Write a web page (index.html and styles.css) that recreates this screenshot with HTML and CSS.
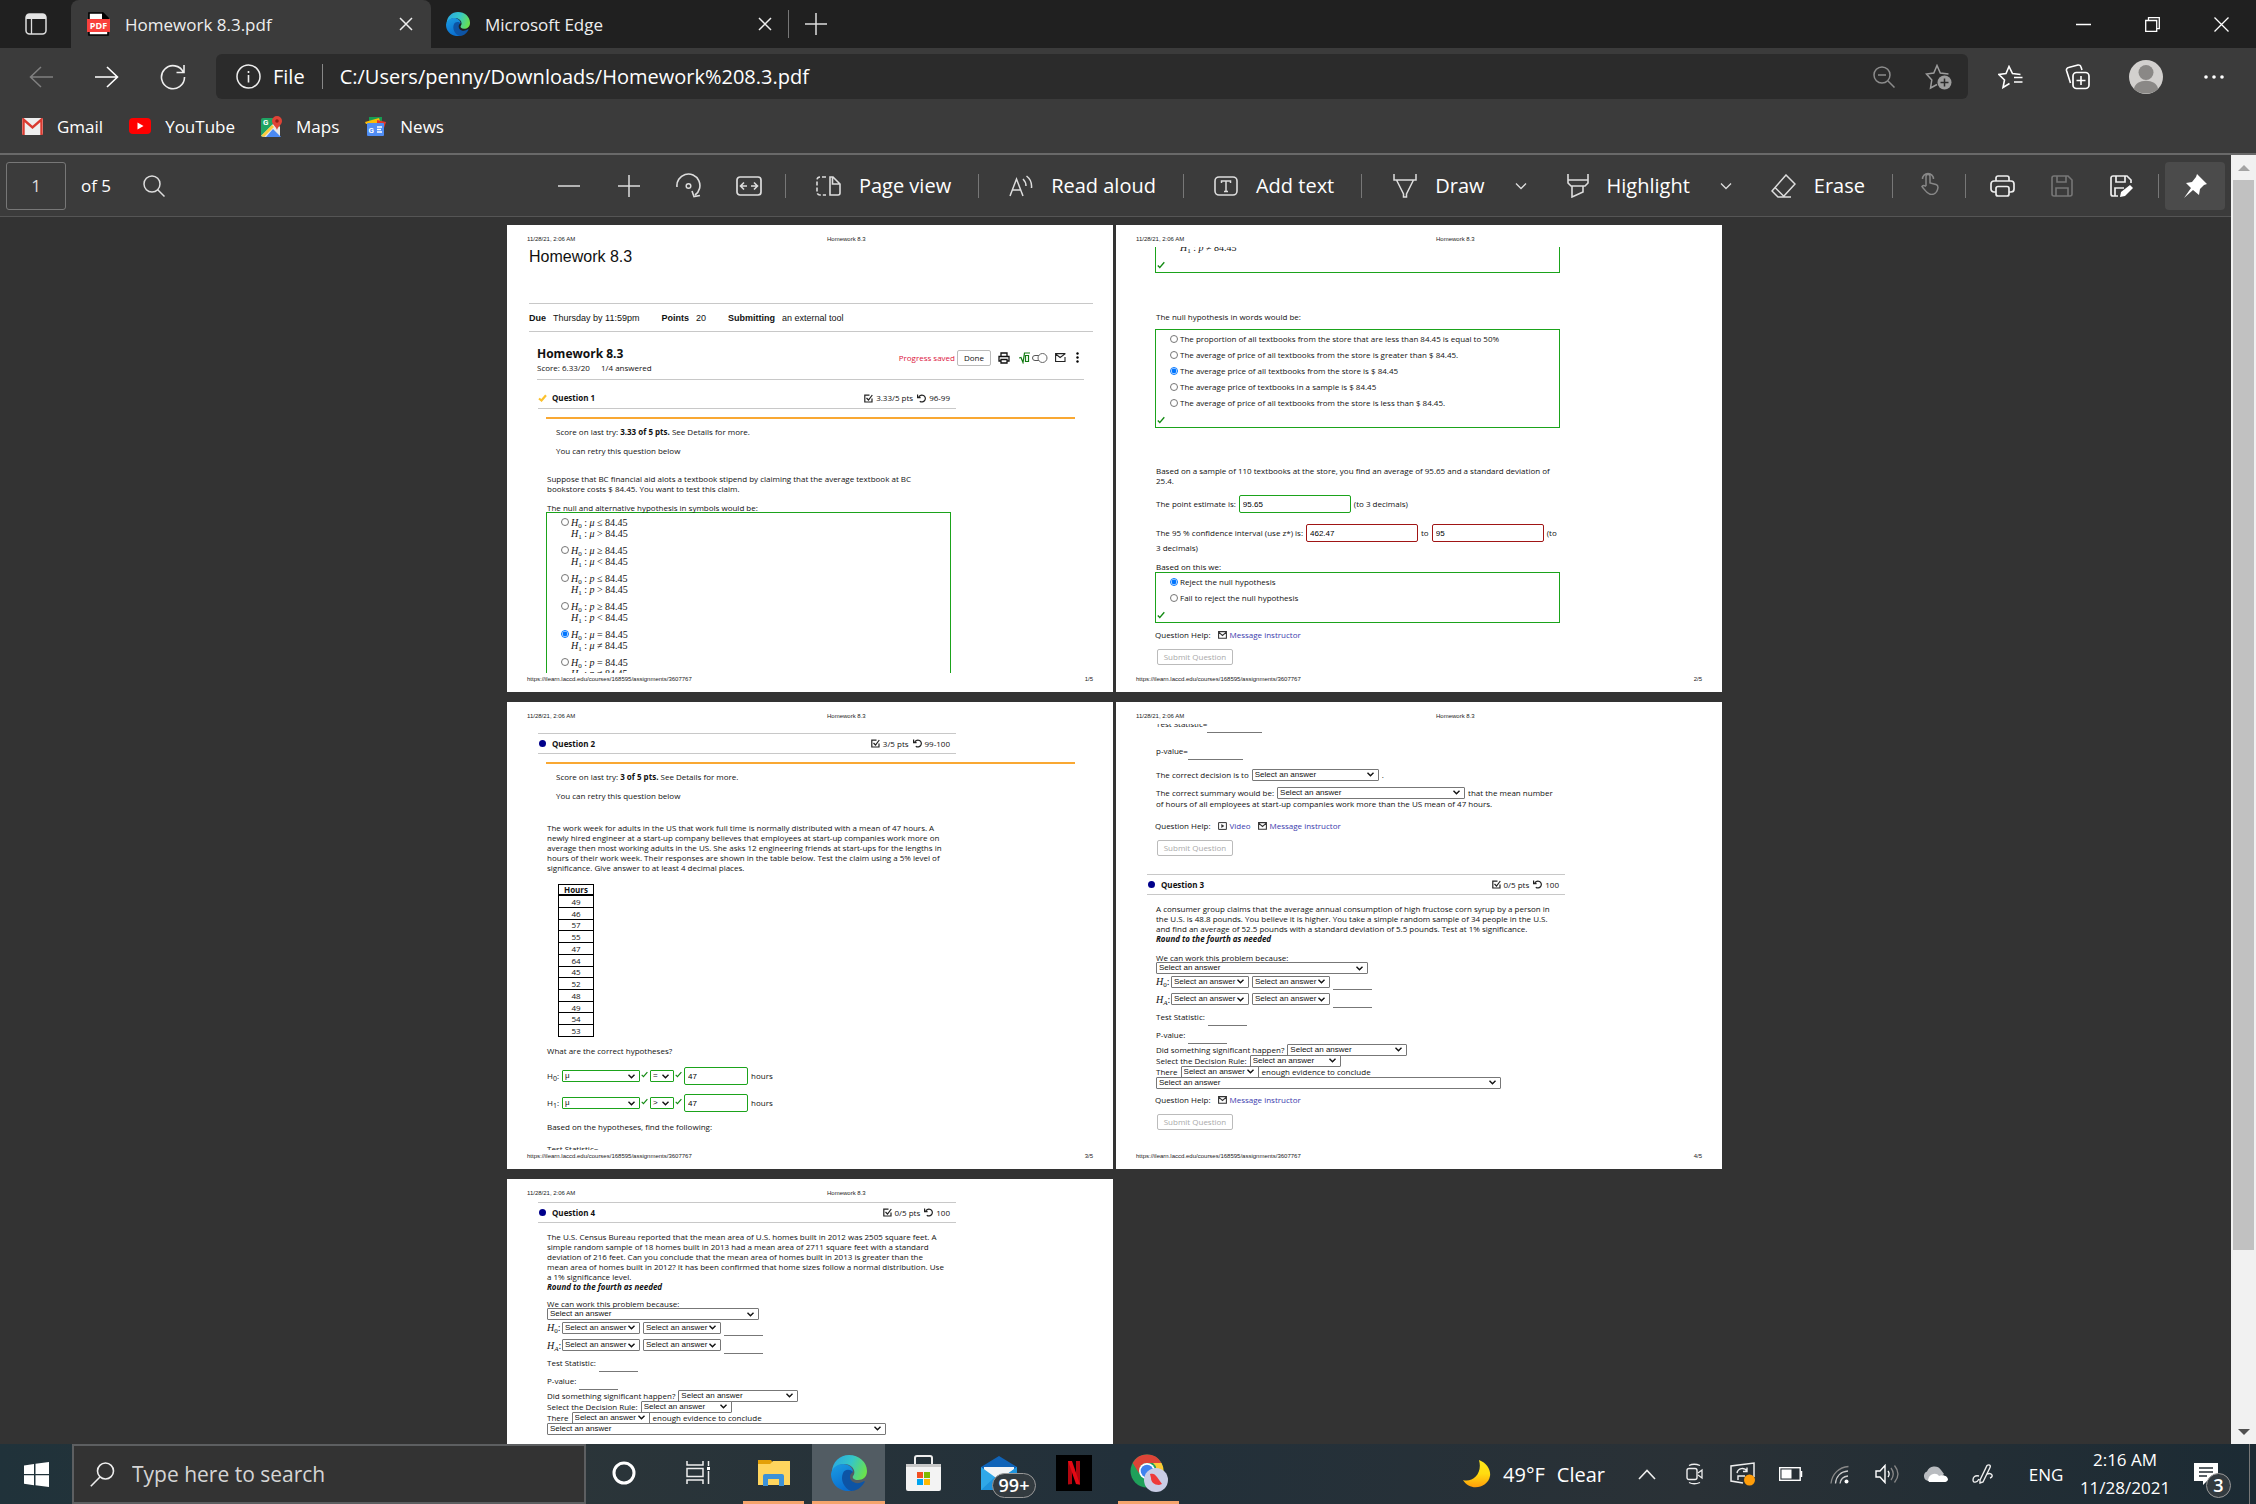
FILE: index.html
```html
<!DOCTYPE html>
<html lang="en">
<head>
  <meta charset="UTF-8" />
  <meta name="viewport" content="width=device-width, initial-scale=1.0" />
  <title>Homework 8.3.pdf</title>
  <link rel="stylesheet" href="styles.css">
</head>
<body>
  <!-- shared icons -->
  <svg class="sprite" aria-hidden="true">
    <defs>
      <linearGradient id="edge-top" x1="0" y1="0.3" x2="1" y2="0.6">
        <stop offset="0" stop-color="#2aa9e0" /><stop offset="0.5" stop-color="#35c6c8" /><stop offset="1" stop-color="#6be24a" />
      </linearGradient>
      <linearGradient id="edge-left" x1="0" y1="0" x2="0.4" y2="1">
        <stop offset="0" stop-color="#1b9de2" /><stop offset="1" stop-color="#0a6fd0" />
      </linearGradient>
      <linearGradient id="moon" x1="0" y1="0" x2="0" y2="1">
        <stop offset="0" stop-color="#ffe81a" /><stop offset="0.5" stop-color="#ffdc10" /><stop offset="1" stop-color="#ff9d0a" />
      </linearGradient>
    </defs>
    <symbol id="edge" viewBox="0 0 36 36">
      <path d="M1 17C1 7 9 0 18 0c10 0 18 7 18 16 0 6-4 9-9 9-4 0-6-2-5-4 2-2 2-6-1-9C16 7 6 8 1 17z" fill="url(#edge-top)" />
      <path d="M0 19C1 12 7 9 12 9c6 0 10 4 10 8-5-3-10 1-9 7 1 6 5 10 10 12C11 38 0 31 0 19z" fill="url(#edge-left)" />
      <path d="M12 18c2-4 7-4 10-1-3 2-4 5-2 8 3 4 9 4 13 1 1 0 1 1 0 2-3 5-8 8-13 8-7-3-11-11-8-18z" fill="#0d54a5" />
    </symbol>
    <symbol id="close" viewBox="0 0 14 14"><path d="M1 1l12 12M13 1L1 13" stroke="#eee" stroke-width="1.5" /></symbol>
    <symbol id="chevron" viewBox="0 0 12 8"><path d="M1 1.500l5 5 5-5" fill="none" stroke="#ddd" stroke-width="1.300" /></symbol>
    <symbol id="pts" viewBox="0 0 9 9"><path d="M8 4.500v3.500H.800V1.200H5.500M2.500 4l2 2L8.300 1" fill="none" stroke="#222" stroke-width="1.200" /></symbol>
    <symbol id="undo" viewBox="0 0 9 9"><path d="M1.800 3.200A3.400 3.400 0 1 1 2.800 7.200M.600.600v3h3" fill="none" stroke="#222" stroke-width="1.200" /></symbol>
    <symbol id="mail" viewBox="0 0 9 8"><path d="M.600.600h7.800v6.600H.600zM.600 1.200l3.900 3.300 3.900-3.300" fill="none" stroke="#333" stroke-width="1.100" /></symbol>
    <symbol id="tick" viewBox="0 0 8 7"><path d="M.800 4l2 2L7.300.800" fill="none" stroke="#128a12" stroke-width="1.300" /></symbol>
  </svg>

  <header class="browser">
    <div class="tabs">
      <button class="tab-menu" aria-label="Tab actions">
        <svg width="22" height="22" viewBox="0 0 22 22"><rect x="1" y="1" width="20" height="20" rx="3.500" fill="none" stroke="#ddd" stroke-width="1.500" /><path d="M1 6V4a3 3 0 0 1 3-3h14a3 3 0 0 1 3 3v2z" fill="#e4e4e4" /><path d="M6.500 6v15" stroke="#ddd" stroke-width="1.300" /></svg>
      </button>
      <div class="tab active">
        <svg width="23" height="24" viewBox="0 0 23 24"><path d="M2 1h14l5 5v17H2z" fill="#fff" stroke="#000" stroke-width="1.600" /><path d="M15 0l7 7h-7z" fill="#000" /><rect y="7" width="23" height="13" fill="#f8403c" /><text x="11.500" y="17" text-anchor="middle" class="pdf-text">PDF</text></svg>
        <span>Homework 8.3.pdf</span>
        <button aria-label="Close tab"><svg width="14" height="14"><use href="#close" /></svg></button>
      </div>
      <div class="tab">
        <svg width="24" height="24"><use href="#edge" /></svg>
        <span>Microsoft Edge</span>
        <button aria-label="Close tab"><svg width="14" height="14"><use href="#close" /></svg></button>
      </div>
      <button class="new-tab" aria-label="New tab"><svg width="22" height="22" viewBox="0 0 22 22"><path d="M11 0v22M0 11h22" stroke="#ddd" stroke-width="1.500" /></svg></button>
      <div class="window-controls">
        <button aria-label="Minimize"><svg width="15" height="15" viewBox="0 0 15 15"><path d="M0 7.500h15" stroke="#fff" stroke-width="1.500" /></svg></button>
        <button aria-label="Restore"><svg width="15" height="15" viewBox="0 0 15 15"><path d="M.700 3.500h11v10.800h-11zM3.500 3V.700h10.800v11h-2.300" fill="none" stroke="#fff" stroke-width="1.300" /></svg></button>
        <button aria-label="Close"><svg width="15" height="15" viewBox="0 0 15 15"><path d="M.500.500l14 14M14.500.500l-14 14" stroke="#fff" stroke-width="1.300" /></svg></button>
      </div>
    </div>

    <nav class="navbar">
      <button aria-label="Back"><svg width="24" height="22" viewBox="0 0 24 22"><path d="M24 11H1.500M12 1L1.500 11 12 21" fill="none" stroke="#808080" stroke-width="1.500" /></svg></button>
      <button aria-label="Forward"><svg width="24" height="22" viewBox="0 0 24 22"><path d="M0 11h22.500M12 1l10.500 10L12 21" fill="none" stroke="#fff" stroke-width="1.600" /></svg></button>
      <button aria-label="Refresh"><svg width="26" height="26" viewBox="0 0 26 26"><path d="M23.500 8.500A11.500 11.500 0 1 0 24.500 13M24 1v7.500h-7.500" fill="none" stroke="#eee" stroke-width="1.600" /></svg></button>
      <div class="address">
        <svg width="25" height="25" viewBox="0 0 25 25"><circle cx="12.500" cy="12.500" r="11.500" fill="none" stroke="#eee" stroke-width="1.500" /><path d="M12.500 11v7.500M12.500 7v2" stroke="#eee" stroke-width="1.600" /></svg>
        <span class="scheme">File</span>
        <input type="text" aria-label="Address" value="C:/Users/penny/Downloads/Homework%208.3.pdf">
        <button aria-label="Zoom out"><svg width="22" height="22" viewBox="0 0 22 22"><circle cx="9" cy="9" r="8" fill="none" stroke="#8c8c8c" stroke-width="1.500" /><path d="M15 15l6.500 6.500M5 9h8" stroke="#8c8c8c" stroke-width="1.500" /></svg></button>
        <button aria-label="Add to favorites"><svg width="27" height="26" viewBox="0 0 27 26"><path d="M12 20.500L5.500 24l1.300-8L1.500 10l7.300-1L12 1.500l3.300 7.500 8.200 1" fill="none" stroke="#9c9c9c" stroke-width="1.500" /><circle cx="19.500" cy="18.500" r="7" fill="#9c9c9c" /><path d="M19.500 14.500v8M15.500 18.500h8" stroke="#2b2b2b" stroke-width="1.500" /></svg></button>
      </div>
      <button class="wide" aria-label="Favorites"><svg width="25" height="24" viewBox="0 0 25 24"><path d="M11.500 18.500L5 22.500l1.500-7.500-5.500-5.500 7-1 3-7 3.500 7 8 1M16 12.500h8.500M16 17h8.500" fill="none" stroke="#fff" stroke-width="1.600" /></svg></button>
      <button class="wide" aria-label="Collections"><svg width="26" height="26" viewBox="0 0 26 26"><rect x="8" y="8.500" width="16" height="16" rx="3.500" fill="none" stroke="#fff" stroke-width="1.700" /><path d="M16 12v9M11.500 16.500h9M5.500 19L1.500 6.500a2.500 2.500 0 0 1 2-3L13 1a2.500 2.500 0 0 1 3 2l1 3" fill="none" stroke="#fff" stroke-width="1.600" /></svg></button>
      <button class="wide" aria-label="Profile"><svg width="34" height="34" viewBox="0 0 34 34"><circle cx="17" cy="17" r="17" fill="#d2d0ce" /><circle cx="17" cy="12.500" r="7.500" fill="#8a8886" /><path d="M5 29c1-11 23-11 24 0-6 6-18 6-24 0z" fill="#8a8886" /></svg></button>
      <button class="wide" aria-label="Settings and more"><svg width="20" height="4" viewBox="0 0 20 4"><circle cx="2" cy="2" r="1.800" fill="#fff" /><circle cx="10" cy="2" r="1.800" fill="#fff" /><circle cx="18" cy="2" r="1.800" fill="#fff" /></svg></button>
    </nav>

    <div class="bookmarks">
      <a href="#"><svg width="21" height="17" viewBox="0 0 21 17"><rect width="21" height="17" rx="2" fill="#eee" /><path d="M1.500 17V1.500l9 8 9-8V17" fill="none" stroke="#d93a30" stroke-width="2.400" /></svg>Gmail</a>
      <a href="#"><svg width="22" height="16" viewBox="0 0 22 16"><rect width="22" height="16" rx="4" fill="#f00" /><path d="M8.500 4.500l6 3.500-6 3.500z" fill="#fff" /></svg>YouTube</a>
      <a href="#"><svg width="21" height="21" viewBox="0 0 21 21"><rect x="0" y="2" width="19" height="19" rx="2" fill="#1fa463" /><path d="M1 21L12 10l8 11z" fill="#4a89f3" /><path d="M0 20L14 6l5 5v9l-7-7-7 8z" fill="#e8e8e8" /><path d="M0 20l11-11 2 2-10 10z" fill="#fccc3d" /><path d="M6 21l6-7 7 7z" fill="#4a89f3" /><text x="2" y="9" class="g-text">G</text><path d="M16 0a5 5 0 0 1 5 5c0 4-4 5-5 9-1-4-5-5-5-9a5 5 0 0 1 5-5z" fill="#e04336" /><circle cx="16" cy="5" r="1.800" fill="#8c2118" /></svg>Maps</a>
      <a href="#"><svg width="21" height="19" viewBox="0 0 21 19"><path d="M4 0h13v6H4z" fill="#179c52" /><path d="M0 5l14-4 2 6H1z" fill="#fbbc05" /><path d="M12 3l9 2-2 6h-7z" fill="#e5392c" /><rect x="2" y="6" width="17" height="13" rx="1" fill="#4f8df5" /><text x="3.500" y="16" class="g-text">G</text><path d="M12 10h5M12 12.500h4M12 15h5" stroke="#fff" stroke-width="1.300" /></svg>News</a>
    </div>
  </header>

  <main class="viewer">
    <div class="pdf">
      <div class="toolbar">
        <input class="page-number" type="text" aria-label="Page number" value="1">
        <span class="page-count">of 5</span>
        <button class="search" aria-label="Search"><svg width="22" height="22" viewBox="0 0 22 22"><circle cx="9" cy="9" r="8" fill="none" stroke="#ddd" stroke-width="1.500" /><path d="M14.500 14.500l7 7" stroke="#ddd" stroke-width="1.500" /></svg></button>
        <div class="tools">
          <div class="tool-group">
            <button class="icon-tool" aria-label="Zoom out"><svg width="22" height="22" viewBox="0 0 22 22"><path d="M0 11h22" stroke="#ddd" stroke-width="1.500" /></svg></button>
            <button class="icon-tool" aria-label="Zoom in"><svg width="22" height="22" viewBox="0 0 22 22"><path d="M0 11h22M11 0v22" stroke="#ddd" stroke-width="1.500" /></svg></button>
            <button class="icon-tool" aria-label="Rotate"><svg width="26" height="26" viewBox="0 0 26 26"><path d="M1 14A11.500 11.500 0 1 1 19 22M16 18l2 5.500 6-1" fill="none" stroke="#ddd" stroke-width="1.600" /><circle cx="12.500" cy="13" r="2.300" fill="none" stroke="#ddd" stroke-width="1.500" /></svg></button>
            <button class="icon-tool" aria-label="Fit to width"><svg width="26" height="20" viewBox="0 0 26 20"><rect x="1" y="1" width="24" height="18" rx="3" fill="none" stroke="#ddd" stroke-width="1.700" /><path d="M11 10H5M8 6.500L4.500 10 8 13.500M15 10h6M18 6.500l3.500 3.500-3.500 3.500" fill="none" stroke="#ddd" stroke-width="1.600" /></svg></button>
          </div>
          <button class="tool"><svg width="25" height="20" viewBox="0 0 25 20"><path d="M14 1v18h8a2 2 0 0 0 2-2V8l-7-7zM16.500 1v7H24" fill="none" stroke="#ddd" stroke-width="1.600" /><path d="M10 1H4a3 3 0 0 0-3 3v12a3 3 0 0 0 3 3h6" fill="none" stroke="#ddd" stroke-width="1.600" stroke-dasharray="4 2" /></svg><span>Page view</span></button>
          <button class="tool"><svg width="24" height="22" viewBox="0 0 24 22"><path d="M1 21L7.500 4 14 21M3 15h9M14 4c2 2 3 4 3 7M17.500 1c4 3 5.500 7 5 12" fill="none" stroke="#ddd" stroke-width="1.500" /></svg><span>Read aloud</span></button>
          <button class="tool"><svg width="24" height="20" viewBox="0 0 24 20"><rect x="1" y="1" width="22" height="18" rx="4" fill="none" stroke="#ddd" stroke-width="1.600" /><path d="M7.500 7V5h9v2M12 5v10.500M10 15.500h4" fill="none" stroke="#ddd" stroke-width="1.500" /></svg><span>Add text</span></button>
          <button class="tool split"><svg width="24" height="24" viewBox="0 0 24 24"><path d="M1 0v6h22V0M3.500 6l7 14v3h3v-3l7-14" fill="none" stroke="#ddd" stroke-width="1.500" /></svg><span>Draw</span></button>
          <button class="more" aria-label="Draw options"><svg width="12" height="8"><use href="#chevron" /></svg></button>
          <button class="tool split"><svg width="22" height="24" viewBox="0 0 22 24"><path d="M1 0v6h20V0M1 6v3l3 3h14l3-3V6M5 12v11l11-5v-6" fill="none" stroke="#ddd" stroke-width="1.600" /></svg><span>Highlight</span></button>
          <button class="more" aria-label="Highlight options"><svg width="12" height="8"><use href="#chevron" /></svg></button>
          <button class="tool"><svg width="25" height="24" viewBox="0 0 25 24"><path d="M15 1l9 9-12 13H7l-6-6zM4 13.500l9 9M7 23h13" fill="none" stroke="#ddd" stroke-width="1.500" /></svg><span>Erase</span></button>
          <div class="tool-group">
            <button class="icon-tool raised" aria-label="Touch draw" disabled><svg width="20" height="24" viewBox="0 0 20 24"><path d="M7 15V5.500a2 2 0 0 1 4 0V12l6 1.500c1.500.500 2 1.500 2 3-.500 4-3 7-7 7-4-.500-5-3-9-8 1.500-2 2.500-1 4 0M3.500 8a5.500 5.500 0 1 1 11 0" fill="none" stroke="#888" stroke-width="1.500" /></svg></button>
          </div>
          <div class="tool-group">
            <button class="icon-tool" aria-label="Print"><svg width="25" height="22" viewBox="0 0 25 22"><path d="M6 6V3a2 2 0 0 1 2-2h9a2 2 0 0 1 2 2v3M6 17H4a3 3 0 0 1-3-3V9a3 3 0 0 1 3-3h17a3 3 0 0 1 3 3v5a3 3 0 0 1-3 3h-2" fill="none" stroke="#eee" stroke-width="1.700" /><rect x="6" y="11.500" width="13" height="9.500" rx="2" fill="none" stroke="#eee" stroke-width="1.700" /></svg></button>
            <button class="icon-tool" aria-label="Save" disabled><svg width="22" height="22" viewBox="0 0 22 22"><path d="M1 3a2 2 0 0 1 2-2h14l4 4v14a2 2 0 0 1-2 2H3a2 2 0 0 1-2-2zM6 1v6h9V1M5 21v-8h12v8" fill="none" stroke="#777" stroke-width="1.600" /></svg></button>
            <button class="icon-tool" aria-label="Save as"><svg width="24" height="22" viewBox="0 0 24 22"><path d="M21 8V5l-4-4H3a2 2 0 0 0-2 2v16a2 2 0 0 0 2 2h5M6 1v6h9V1M5 21v-8h9" fill="none" stroke="#eee" stroke-width="1.700" /><path d="M20 10l3 3-8 8-5 1 1-5z" fill="#fff" /></svg></button>
          </div>
          <button class="pin" aria-label="Unpin toolbar"><svg width="24" height="24" viewBox="0 0 24 24"><path d="M14 0l10 10-3 1-4 4-1 6-6-5-9 8 7-10-5-5 6-1 4-5z" fill="#fff" /></svg></button>
        </div>
      </div>

      <div class="pages">
        <article class="page">
          <header><span>11/28/21, 2:06 AM</span><span>Homework 8.3</span></header>
          <div class="body">
            <h1>Homework 8.3</h1>
            <div class="due"><b>Due</b><span>Thursday by 11:59pm</span><b>Points</b><span>20</span><b>Submitting</b><span>an external tool</span></div>
            <div class="assess">
              <div>
                <h2>Homework 8.3</h2>
                <p>Score: 6.33/20 <span class="answered">1/4 answered</span></p>
              </div>
              <div class="assess-tools">
                <span class="saved">Progress saved</span>
                <button class="done">Done</button>
                <svg class="printer" width="12" height="12" viewBox="0 0 12 12"><path d="M3 4V1h6v3M3 9H1V4.500h10V9H9M3 7.500h6V11H3z" fill="none" stroke="#111" stroke-width="1.300" /></svg>
                <svg width="12" height="12" viewBox="0 0 12 12"><path d="M0 6l2-.500L4 10.500 5.500 1H11M6.500 3.500h3v6h-3z" fill="none" stroke="#127a12" stroke-width="1.200" /></svg>
                <svg width="17" height="12" viewBox="0 0 17 12"><rect x="1.500" y="3.500" width="10" height="5" rx="2.500" fill="#fff" stroke="#555" /><circle cx="11.500" cy="6" r="4.500" fill="#fff" stroke="#666" /></svg>
                <svg class="envelope" width="11" height="9" viewBox="0 0 11 9"><path d="M10 4v4.500H.600V.600h9.800M.600 1l4.500 3.500L10.400.600" fill="none" stroke="#222" stroke-width="1.100" /></svg>
                <svg class="dots" width="3" height="11" viewBox="0 0 3 11"><circle cx="1.500" cy="1.500" r="1.200" /><circle cx="1.500" cy="5.500" r="1.200" /><circle cx="1.500" cy="9.500" r="1.200" /></svg>
              </div>
            </div>
            <div class="q-head first">
              <svg width="9" height="8" viewBox="0 0 9 8"><path d="M1 4.500l2.500 2L8 1.200" fill="none" stroke="#fcc12d" stroke-width="2.200" /></svg>
              <b>Question 1</b><svg width="9" height="9"><use href="#pts" /></svg><span>3.33/5 pts</span><svg width="9" height="9"><use href="#undo" /></svg><span>96-99</span>
            </div>
            <div class="notice">
              <p>Score on last try: <b>3.33 of 5 pts.</b> See Details for more.</p>
              <p>You can retry this question below</p>
            </div>
            <div class="question mt-18">
              <p>Suppose that BC financial aid alots a textbook stipend by claiming that the average textbook at BC<br>bookstore costs $ 84.45. You want to test this claim.</p>
              <p class="mt-9">The null and alternative hypothesis in symbols would be:</p>
              <div class="answers symbols">
                <label><input type="radio" name="symbols"><span class="math"><i>H</i><sub>0</sub> : <i>μ</i> ≤ 84.45<br><i>H</i><sub>1</sub> : <i>μ</i> &gt; 84.45</span></label>
                <label><input type="radio" name="symbols"><span class="math"><i>H</i><sub>0</sub> : <i>μ</i> ≥ 84.45<br><i>H</i><sub>1</sub> : <i>μ</i> &lt; 84.45</span></label>
                <label><input type="radio" name="symbols"><span class="math"><i>H</i><sub>0</sub> : <i>p</i> ≤ 84.45<br><i>H</i><sub>1</sub> : <i>p</i> &gt; 84.45</span></label>
                <label><input type="radio" name="symbols"><span class="math"><i>H</i><sub>0</sub> : <i>p</i> ≥ 84.45<br><i>H</i><sub>1</sub> : <i>p</i> &lt; 84.45</span></label>
                <label><input type="radio" name="symbols" checked><span class="math"><i>H</i><sub>0</sub> : <i>μ</i> = 84.45<br><i>H</i><sub>1</sub> : <i>μ</i> ≠ 84.45</span></label>
                <label><input type="radio" name="symbols"><span class="math"><i>H</i><sub>0</sub> : <i>p</i> = 84.45<br><i>H</i><sub>1</sub> : <i>p</i> ≠ 84.45</span></label>
              </div>
            </div>
          </div>
          <footer><span>https://ilearn.laccd.edu/courses/168595/assignments/3607767</span><span>1/5</span></footer>
        </article>

        <article class="page">
          <header><span>11/28/21, 2:06 AM</span><span>Homework 8.3</span></header>
          <div class="body">
            <div class="question">
              <div class="answers continued">
                <span class="math"><i>H</i><sub>1</sub> : <i>p</i> ≠ 84.45</span>
                <svg class="ok" width="8" height="8"><use href="#tick" /></svg>
              </div>
              <p class="mt-39">The null hypothesis in words would be:</p>
              <div class="answers mt-7">
                <label><input type="radio" name="words"><span>The proportion of all textbooks from the store that are less than 84.45 is equal to 50%</span></label>
                <label><input type="radio" name="words"><span>The average of price of all textbooks from the store is greater than $ 84.45.</span></label>
                <label><input type="radio" name="words" checked><span>The average price of all textbooks from the store is $ 84.45</span></label>
                <label><input type="radio" name="words"><span>The average price of textbooks in a sample is $ 84.45</span></label>
                <label><input type="radio" name="words"><span>The average of price of all textbooks from the store is less than $ 84.45.</span></label>
                <svg class="ok" width="8" height="8"><use href="#tick" /></svg>
              </div>
              <p class="mt-38">Based on a sample of 110 textbooks at the store, you find an average of 95.65 and a standard deviation of<br>25.4.</p>
              <div class="row tall mt-9"><label for="point">The point estimate is:</label><input id="point" class="box right" type="text" value="95.65"><span>(to 3 decimals)</span></div>
              <div class="row tall mt-11"><label for="low">The 95 % confidence interval (use z*) is:</label><input id="low" class="box wrong" type="text" value="462.47"><label for="high">to</label><input id="high" class="box wrong" type="text" value="95"><span>(to</span></div>
              <p>3 decimals)</p>
              <p class="mt-9">Based on this we:</p>
              <div class="answers">
                <label><input type="radio" name="decision" checked><span>Reject the null hypothesis</span></label>
                <label><input type="radio" name="decision"><span>Fail to reject the null hypothesis</span></label>
                <svg class="ok" width="8" height="8"><use href="#tick" /></svg>
              </div>
              <div class="help mt-7">Question Help: <svg width="9" height="8"><use href="#mail" /></svg><a href="#">Message instructor</a></div>
              <button class="submit" disabled>Submit Question</button>
            </div>
          </div>
          <footer><span>https://ilearn.laccd.edu/courses/168595/assignments/3607767</span><span>2/5</span></footer>
        </article>

        <article class="page">
          <header><span>11/28/21, 2:06 AM</span><span>Homework 8.3</span></header>
          <div class="body">
            <div class="q-head mt-9">
              <i class="dot"></i>
              <b>Question 2</b><svg width="9" height="9"><use href="#pts" /></svg><span>3/5 pts</span><svg width="9" height="9"><use href="#undo" /></svg><span>99-100</span>
            </div>
            <div class="notice">
              <p>Score on last try: <b>3 of 5 pts.</b> See Details for more.</p>
              <p>You can retry this question below</p>
            </div>
            <div class="question mt-22">
              <p>The work week for adults in the US that work full time is normally distributed with a mean of 47 hours. A<br>newly hired engineer at a start-up company believes that employees at start-up companies work more on<br>average then most working adults in the US. She asks 12 engineering friends at start-ups for the lengths in<br>hours of their work week. Their responses are shown in the table below. Test the claim using a 5% level of<br>significance. Give answer to at least 4 decimal places.</p>
              <table class="hours">
                <thead><tr><th>Hours</th></tr></thead>
                <tbody>
                  <tr><td>49</td></tr>
                  <tr><td>46</td></tr>
                  <tr><td>57</td></tr>
                  <tr><td>55</td></tr>
                  <tr><td>47</td></tr>
                  <tr><td>64</td></tr>
                  <tr><td>45</td></tr>
                  <tr><td>52</td></tr>
                  <tr><td>48</td></tr>
                  <tr><td>49</td></tr>
                  <tr><td>54</td></tr>
                  <tr><td>53</td></tr>
                </tbody>
              </table>
              <p class="mt-9">What are the correct hypotheses?</p>
              <div class="row tall mt-11">
                <span>H<sub>0</sub>:</span>
                <select class="right sel-small" aria-label="Null parameter"><option>μ</option></select><svg class="mark" width="7" height="7"><use href="#tick" /></svg>
                <select class="right sel-sign" aria-label="Null sign"><option>=</option></select><svg class="mark" width="7" height="7"><use href="#tick" /></svg>
                <input class="box right short" type="text" aria-label="Null value" value="47"><span>hours</span>
              </div>
              <div class="row tall mt-9">
                <span>H<sub>1</sub>:</span>
                <select class="right sel-small" aria-label="Alternative parameter"><option>μ</option></select><svg class="mark" width="7" height="7"><use href="#tick" /></svg>
                <select class="right sel-sign" aria-label="Alternative sign"><option>&gt;</option></select><svg class="mark" width="7" height="7"><use href="#tick" /></svg>
                <input class="box right short" type="text" aria-label="Alternative value" value="47"><span>hours</span>
              </div>
              <p class="mt-9">Based on the hypotheses, find the following:</p>
              <p class="mt-12">Test Statistic=</p>
            </div>
          </div>
          <footer><span>https://ilearn.laccd.edu/courses/168595/assignments/3607767</span><span>3/5</span></footer>
        </article>

        <article class="page">
          <header><span>11/28/21, 2:06 AM</span><span>Homework 8.3</span></header>
          <div class="body">
            <div class="question">
              <div class="row tall tight cut"><label for="stat2">Test Statistic=</label><input id="stat2" class="line long" type="text"></div>
              <div class="row tall tight mt-9"><label for="pval2">p-value=</label><input id="pval2" class="line long" type="text"></div>
              <div class="row mt-9"><label for="dec2">The correct decision is to</label><select id="dec2" class="sel-decision"><option>Select an answer</option></select><span>.</span></div>
              <div class="row mt-7"><label for="sum2">The correct summary would be:</label><select id="sum2" class="sel-summary"><option>Select an answer</option></select><span>that the mean number</span></div>
              <p>of hours of all employees at start-up companies work more than the US mean of 47 hours.</p>
              <div class="help mt-12">Question Help: <svg width="9" height="8" viewBox="0 0 9 8"><path d="M.600.600h7.800v6.800H.600z" fill="none" stroke="#333" /><path d="M3.300 2l3 2-3 2z" fill="#333" /></svg><a href="#">Video</a> <svg width="9" height="8"><use href="#mail" /></svg><a href="#">Message instructor</a></div>
              <button class="submit" disabled>Submit Question</button>
            </div>
            <div class="q-head mt-18">
              <i class="dot"></i>
              <b>Question 3</b><svg width="9" height="9"><use href="#pts" /></svg><span>0/5 pts</span><svg width="9" height="9"><use href="#undo" /></svg><span>100</span>
            </div>
            <div class="question mt-9">
              <p>A consumer group claims that the average annual consumption of high fructose corn syrup by a person in<br>the U.S. is 48.8 pounds. You believe it is higher. You take a simple random sample of 34 people in the U.S.<br>and find an average of 52.5 pounds with a standard deviation of 5.5 pounds. Test at 1% significance.<br><b><i>Round to the fourth as needed</i></b></p>
              <p class="mt-9"><label for="why3">We can work this problem because:</label></p>
              <div class="row snug"><select id="why3" class="sel-why"><option>Select an answer</option></select></div>
              <div class="row tall"><span class="math hyp"><i>H</i><sub>0</sub>:</span><select class="sel-small" aria-label="Null parameter"><option>Select an answer</option></select><select class="sel-small" aria-label="Null sign"><option>Select an answer</option></select><input class="line" type="text" aria-label="Null value"></div>
              <div class="row tall"><span class="math hyp"><i>H</i><sub><i>A</i></sub>:</span><select class="sel-small" aria-label="Alternative parameter"><option>Select an answer</option></select><select class="sel-small" aria-label="Alternative sign"><option>Select an answer</option></select><input class="line" type="text" aria-label="Alternative value"></div>
              <div class="row tall"><label for="stat3">Test Statistic:</label><input id="stat3" class="line" type="text"></div>
              <div class="row tall"><label for="pval3">P-value:</label><input id="pval3" class="line" type="text"></div>
              <div class="row"><label for="sig3">Did something significant happen?</label><select id="sig3" class="sel-sig"><option>Select an answer</option></select></div>
              <div class="row"><label for="rule3">Select the Decision Rule:</label><select id="rule3" class="sel-rule"><option>Select an answer</option></select></div>
              <div class="row"><label for="there3">There</label><select id="there3" class="sel-small"><option>Select an answer</option></select><span>enough evidence to conclude</span></div>
              <div class="row"><select class="sel-conclude" aria-label="Conclusion"><option>Select an answer</option></select></div>
              <div class="help mt-7">Question Help: <svg width="9" height="8"><use href="#mail" /></svg><a href="#">Message instructor</a></div>
              <button class="submit" disabled>Submit Question</button>
            </div>
          </div>
          <footer><span>https://ilearn.laccd.edu/courses/168595/assignments/3607767</span><span>4/5</span></footer>
        </article>

        <article class="page">
          <header><span>11/28/21, 2:06 AM</span><span>Homework 8.3</span></header>
          <div class="body">
            <div class="q-head">
              <i class="dot"></i>
              <b>Question 4</b><svg width="9" height="9"><use href="#pts" /></svg><span>0/5 pts</span><svg width="9" height="9"><use href="#undo" /></svg><span>100</span>
            </div>
            <div class="question mt-9">
              <p>The U.S. Census Bureau reported that the mean area of U.S. homes built in 2012 was 2505 square feet. A<br>simple random sample of 18 homes built in 2013 had a mean area of 2711 square feet with a standard<br>deviation of 216 feet. Can you conclude that the mean area of homes built in 2013 is greater than the<br>mean area of homes built in 2012? It has been confirmed that home sizes follow a normal distribution. Use<br>a 1% significance level.<br><b><i>Round to the fourth as needed</i></b></p>
              <p class="mt-7"><label for="why4">We can work this problem because:</label></p>
              <div class="row snug"><select id="why4" class="sel-why"><option>Select an answer</option></select></div>
              <div class="row tall"><span class="math hyp"><i>H</i><sub>0</sub>:</span><select class="sel-small" aria-label="Null parameter"><option>Select an answer</option></select><select class="sel-small" aria-label="Null sign"><option>Select an answer</option></select><input class="line" type="text" aria-label="Null value"></div>
              <div class="row tall"><span class="math hyp"><i>H</i><sub><i>A</i></sub>:</span><select class="sel-small" aria-label="Alternative parameter"><option>Select an answer</option></select><select class="sel-small" aria-label="Alternative sign"><option>Select an answer</option></select><input class="line" type="text" aria-label="Alternative value"></div>
              <div class="row tall"><label for="stat4">Test Statistic:</label><input id="stat4" class="line" type="text"></div>
              <div class="row tall"><label for="pval4">P-value:</label><input id="pval4" class="line" type="text"></div>
              <div class="row"><label for="sig4">Did something significant happen?</label><select id="sig4" class="sel-sig"><option>Select an answer</option></select></div>
              <div class="row"><label for="rule4">Select the Decision Rule:</label><select id="rule4" class="sel-rule"><option>Select an answer</option></select></div>
              <div class="row"><label for="there4">There</label><select id="there4" class="sel-small"><option>Select an answer</option></select><span>enough evidence to conclude</span></div>
              <div class="row"><select class="sel-conclude narrow" aria-label="Conclusion"><option>Select an answer</option></select></div>
            </div>
          </div>
        </article>
      </div>
    </div>

    <div class="scrollbar"><i class="arrow up"></i><div class="thumb"></div><i class="arrow down"></i></div>
  </main>

  <footer class="taskbar">
    <button class="start" aria-label="Start"><svg width="25" height="25" viewBox="0 0 25 25"><path d="M0 3.500L10 2v10H0zM11.500 1.800L25 0v12H11.500zM0 13.200h10v10L0 21.800zM11.500 13.200H25V25l-13.500-1.800z" fill="#fff" /></svg></button>
    <label class="taskbar-search">
      <svg width="25" height="25" viewBox="0 0 25 25"><circle cx="15.500" cy="9" r="8" fill="none" stroke="#eee" stroke-width="1.600" /><path d="M10 15L.800 24.200" stroke="#eee" stroke-width="1.600" /></svg>
      <input type="text" placeholder="Type here to search">
    </label>
    <div class="apps">
      <button aria-label="Cortana"><svg width="24" height="24" viewBox="0 0 24 24"><circle cx="12" cy="12" r="10" fill="none" stroke="#fff" stroke-width="3" /></svg></button>
      <button aria-label="Task View"><svg width="25" height="23" viewBox="0 0 25 23"><path d="M1 0v4h16V0M1 23v-4h16v4M1 7.500h16v8H1zM22.500 0v5M22.500 10v13" fill="none" stroke="#eee" stroke-width="1.500" /><rect x="21" y="6" width="3" height="3" fill="#fff" /></svg></button>
      <button class="running" aria-label="File Explorer"><svg width="32" height="28" viewBox="0 0 32 28"><path d="M0 1h13l2 3v3H0z" fill="#e3a008" /><path d="M0 5h12l3-3h17v24H0z" fill="#ffd55e" /><path d="M5 27V17a2 2 0 0 1 2-2h17a2 2 0 0 1 2 2v10h-5v-7H10v7z" fill="#3d92d8" /></svg></button>
      <button class="current" aria-label="Microsoft Edge"><svg width="36" height="36"><use href="#edge" /></svg></button>
      <button aria-label="Microsoft Store"><svg width="35" height="36" viewBox="0 0 35 36"><path d="M9 12V3a2 2 0 0 1 2-2h13a2 2 0 0 1 2 2v9" fill="none" stroke="#eee" stroke-width="2" /><path d="M0 9h35v25a2 2 0 0 1-2 2H2a2 2 0 0 1-2-2z" fill="#f3f3f3" /><path d="M0 9h35v3H0z" fill="#c8c8c8" /><path d="M11 17h6v6h-6z" fill="#f25022" /><path d="M18 17h6v6h-6z" fill="#7fba00" /><path d="M11 24h6v6h-6z" fill="#00a4ef" /><path d="M18 24h6v6h-6z" fill="#ffb900" /></svg></button>
      <button class="mail-app" aria-label="Mail"><svg width="36" height="34" viewBox="0 0 36 34"><path d="M0 11L18 0l18 11v8H0z" fill="#0f63b8" /><path d="M3 11h30v14H3z" fill="#f2f4f6" /><path d="M0 11l18 13 18-13v23H0z" fill="#2fa8e8" /><path d="M0 34L14 21l4 3 18-13v23z" fill="#1e93dc" /></svg><span class="count">99+</span></button>
      <button aria-label="Netflix"><svg width="36" height="36" viewBox="0 0 36 36"><rect width="36" height="36" fill="#000" /><path d="M12 6h4v23l-4 .500zM20 6h4v23.500l-4-.500z" fill="#b1060f" /><path d="M12 6h4l8 23.500-4-.500z" fill="#e50914" /></svg></button>
      <button class="running" aria-label="Google Chrome"><svg width="38" height="38" viewBox="0 0 38 38"><circle cx="17" cy="17" r="16.500" fill="#1fa05a" /><path d="M2.700 9A16.500 16.500 0 0 1 31.500 9H17a8 8 0 0 0-7.500 11z" fill="#dc4437" /><path d="M31.500 9A16.500 16.500 0 0 1 17 33.500L24 21a8 8 0 0 0-1-12z" fill="#fcc934" /><circle cx="17" cy="17" r="8" fill="#fff" /><circle cx="17" cy="17" r="6.300" fill="#3f83ee" /><circle cx="26" cy="26" r="12" fill="#c9cde6" /><path d="M20 20c3-1 5 0 7 3l5 7-3 1c-5 0-8-3-8-7z" fill="#ee3a3a" /></svg></button>
    </div>
    <button class="weather">
      <svg width="28" height="28" viewBox="0 0 28 28"><path d="M16 0c8 3 12 10 11 16-2 12-20 16-27 4 9 3 20-6 16-20z" fill="url(#moon)" /></svg>
      <span>49°F</span><span>Clear</span>
    </button>
    <div class="tray">
      <button aria-label="Show hidden icons"><svg width="18" height="11" viewBox="0 0 18 11"><path d="M1 10l8-8.500L17 10" fill="none" stroke="#eee" stroke-width="1.600" /></svg></button>
      <button aria-label="Meet Now"><svg width="18" height="22" viewBox="0 0 18 22"><rect x="1" y="5.500" width="10" height="11" rx="2" fill="none" stroke="#eee" stroke-width="1.400" /><path d="M12 10l4-3v8l-4-3M3 2.500Q8 0 14 2.500M3 19.500q5 2.500 11 0" fill="none" stroke="#eee" stroke-width="1.300" /></svg></button>
      <button aria-label="Windows Update"><svg width="26" height="24" viewBox="0 0 26 24"><path d="M13 21L1 19V4l23-3v14" fill="none" stroke="#eee" stroke-width="1.500" /><path d="M7 11a5.500 5.500 0 0 1 10-2M17 5.500V9.500h-4M15 14H8v4" fill="none" stroke="#eee" stroke-width="1.400" /><circle cx="19.500" cy="18" r="5.500" fill="#ff9d0a" /></svg></button>
      <button aria-label="Battery"><svg width="24" height="14" viewBox="0 0 24 14"><rect x=".700" y=".700" width="20.500" height="12.600" fill="none" stroke="#fff" stroke-width="1.400" /><rect x="2.500" y="2.500" width="10" height="9" fill="#fff" /><path d="M22.500 4v6" stroke="#fff" stroke-width="1.500" /></svg></button>
      <button aria-label="Network"><svg width="19" height="19" viewBox="0 0 19 19"><path d="M1 18.500C2 9 9 2 18.500 1.500" fill="none" stroke="#888" stroke-width="1.300" /><path d="M5.500 18.500C6 11 11 6.500 18 6M10 18.500c.500-4 3.500-7 8-7.500" fill="none" stroke="#ccc" stroke-width="1.300" /><circle cx="16.500" cy="16.500" r="2" fill="#fff" /></svg></button>
      <button aria-label="Volume"><svg width="24" height="20" viewBox="0 0 24 20"><path d="M1 7h4l5-5.500v17L5 13H1z" fill="none" stroke="#fff" stroke-width="1.400" /><path d="M13 7c1.500 2 1.500 4 0 6" fill="none" stroke="#fff" stroke-width="1.300" /><path d="M16 4c3 4 3 8 0 12M19.500 1.500c4.500 5.500 4.500 11.500 0 17" fill="none" stroke="#888" stroke-width="1.300" /></svg></button>
      <button aria-label="OneDrive"><svg width="25" height="16" viewBox="0 0 25 16"><path d="M5 15a5 5 0 0 1-1-9.500A8 8 0 0 1 18 4l3 4-8 7z" fill="#b9bcc0" /><path d="M6 16a4.500 4.500 0 0 1 0-5c3-4 8-4 10-1 5-2 9 1 9 3.500-.500 2-2 2.500-4 2.500z" fill="#fff" /></svg></button>
      <button aria-label="Windows Ink"><svg width="22" height="20" viewBox="0 0 22 20"><path d="M8 16L15 1.500c2-1.500 4 0 3 2L11 18l-3 1zM7 12c-4-1-6 1-6 4s4 3 6-1M15 10c5-2 7 3 3 4" fill="none" stroke="#eee" stroke-width="1.400" /></svg></button>
      <button class="lang">ENG</button>
      <button class="clock"><span>2:16 AM</span><span>11/28/2021</span></button>
      <button class="notifications" aria-label="Notifications"><svg width="24" height="22" viewBox="0 0 24 22"><path d="M0 0h24v18H13l-4 4v-4H0z" fill="#fff" /><path d="M5 5h14M5 9h14M5 13h8" stroke="#222c33" stroke-width="1.300" /></svg><span class="count">3</span></button>
    </div>
  </footer>
</body>
</html>
```

FILE: styles.css
```css
* {
  box-sizing: border-box;
}
body {
  margin: 0;
  height: 100vh;
  display: flex;
  flex-direction: column;
  overflow: hidden;
  background-color: #333;
  color: #fff;
  font-family: "Open Sans", sans-serif;
  font-size: 17px;
}
button {
  display: flex;
  align-items: center;
  justify-content: center;
  padding: 0;
  border: 0;
  background: none;
  color: inherit;
  font: inherit;
}
svg {
  flex: none;
}
.sprite {
  position: absolute;
  width: 0;
  height: 0;
}

/* browser chrome */
.browser {
  flex: none;
  background-color: #3b3b3b;
  border-bottom: 2px solid #696969;
}
.tabs {
  display: flex;
  height: 48px;
  background-color: #202020;
}
.tab-menu {
  width: 71px;
}
.tab {
  display: flex;
  align-items: center;
  width: 358px;
  margin: 10px 0;
  padding: 0 16px 0 15px;
  border-right: 1px solid #777;
}
.tab.active {
  width: 360px;
  margin: 0;
  padding: 0 18px 0 16px;
  border: 0;
  border-radius: 8px 8px 0 0;
  background-color: #3b3b3b;
}
.tab span {
  flex: 1;
  margin-left: 15px;
  color: #eee;
}
.pdf-text {
  font: bold 9px "Open Sans", sans-serif;
  fill: #fff;
}
.g-text {
  font: bold 8px Roboto, sans-serif;
  fill: #fff;
}
.new-tab {
  width: 54px;
}
.window-controls {
  display: flex;
  margin-left: auto;
}
.window-controls button {
  width: 69px;
}
.navbar {
  display: flex;
  align-items: center;
  height: 57px;
  padding: 0 8px;
}
.navbar > button {
  width: 66px;
  height: 45px;
}
.navbar > .wide {
  width: 68px;
}
.address {
  flex: 1;
  display: flex;
  align-items: center;
  height: 45px;
  margin: 0 8px 0 10px;
  padding: 0 16px 0 20px;
  border-radius: 6px;
  background-color: #2b2b2b;
  font-size: 20px;
}
.scheme {
  margin: 0 17px 0 12px;
}
.address input {
  flex: 1;
  height: 25px;
  padding: 0 0 0 17px;
  border: 0;
  border-left: 1px solid #888;
  background: none;
  color: #fff;
  font: inherit;
}
.address button {
  margin-left: 30px;
}
.bookmarks {
  display: flex;
  align-items: center;
  gap: 26px;
  height: 48px;
  padding: 0 22px 6px;
}
.bookmarks a {
  display: flex;
  align-items: center;
  gap: 14px;
  color: #fff;
  text-decoration: none;
}

/* pdf viewer */
.viewer {
  flex: 1;
  display: flex;
  min-height: 0;
}
.pdf {
  flex: 1;
  display: flex;
  flex-direction: column;
  min-width: 0;
}
.toolbar {
  flex: none;
  display: flex;
  align-items: center;
  height: 62px;
  padding: 0 6px;
  border-bottom: 1px solid #555;
  background-color: #3b3b3b;
}
.page-number {
  width: 60px;
  height: 48px;
  border: 1px solid #777;
  border-radius: 3px;
  background: none;
  color: #ddd;
  font: inherit;
  text-align: center;
}
.page-count {
  margin-left: 15px;
}
.search {
  margin-left: 32px;
}
.tools {
  display: flex;
  align-items: center;
  margin-left: auto;
}
.tool-group {
  display: flex;
  padding: 0 6px;
  border-right: 1px solid #777;
}
.tool-group .icon-tool {
  width: 60px;
  height: 24px;
}
.tool-group .raised {
  padding-bottom: 6px;
}
.tool {
  height: 24px;
  gap: 18px;
  padding: 0 27px 0 30px;
  border-right: 1px solid #777;
  font-size: 20px;
  white-space: nowrap;
}
.tool.split {
  padding: 0 21px 0 31px;
  border: 0;
}
.more {
  width: 30px;
  height: 24px;
}
.pin {
  width: 60px;
  height: 48px;
  margin-left: 6px;
  border-radius: 4px;
  background-color: #4b4b4b;
}
.scrollbar {
  flex: none;
  width: 25px;
  display: flex;
  flex-direction: column;
  align-items: center;
  background-color: #f1f1f1;
}
.thumb {
  width: 21px;
  height: 83%;
  background-color: #c1c1c1;
}
.arrow {
  margin: 10px 0 9px;
  border: 6px solid transparent;
  border-top-width: 0;
  border-bottom: 6px solid #a3a3a3;
}
.arrow.down {
  margin-top: auto;
  border-top: 6px solid #505050;
  border-bottom-width: 0;
}

/* document pages */
.pages {
  flex: 1;
  min-height: 0;
  overflow: hidden;
  display: grid;
  grid-template-columns: repeat(2, minmax(0, 606px));
  grid-auto-rows: 467px;
  gap: 10px 3px;
  justify-content: center;
  padding: 8px 2px 0 0;
}
.page {
  display: flex;
  flex-direction: column;
  background-color: #fff;
  color: #111;
  font-size: 8px;
  line-height: 10px;
}
.page > header,
.page > footer {
  flex: none;
  display: grid;
  grid-template-columns: 300px 1fr;
  padding-left: 20px;
  font-family: "Liberation Sans", sans-serif;
  font-size: 6px;
  color: #222;
}
.page > header {
  height: 22px;
  padding-top: 9px;
}
.page > footer {
  height: 19px;
  grid-template-columns: 1fr auto;
  padding: 1px 20px 0;
}
.body {
  flex: 1;
  min-height: 0;
  overflow: hidden;
}
.page p {
  margin: 0;
  white-space: nowrap;
}
.page h1 {
  margin: 0 0 36px 22px;
  font: 16px/20px "Liberation Sans", sans-serif;
}
.page .mt-7 { margin-top: 7px; }
.page .mt-9 { margin-top: 9px; }
.page .mt-11 { margin-top: 11px; }
.page .mt-12 { margin-top: 12px; }
.page .mt-18 { margin-top: 18px; }
.page .mt-22 { margin-top: 22px; }
.page .mt-38 { margin-top: 38px; }
.page .mt-39 { margin-top: 39px; }
.page sub {
  font-size: 7px;
  line-height: 0;
  vertical-align: -2px;
}
.due {
  display: flex;
  align-items: center;
  height: 29px;
  margin: 0 20px 0 22px;
  border: 1px solid #c8c8c8;
  border-width: 1px 0;
  font-family: "Liberation Sans", sans-serif;
  font-size: 9px;
}
.due span {
  margin: 0 22px 0 7px;
}
.assess {
  display: flex;
  justify-content: space-between;
  margin: 13px 29px 0 30px;
  padding-bottom: 6px;
  border-bottom: 1px solid #c8c8c8;
}
.assess h2 {
  margin: 0;
  font-size: 12px;
  line-height: 18px;
}
.answered {
  margin-left: 9px;
}
.assess-tools {
  display: flex;
  align-items: center;
  height: 22px;
  padding: 3px 5px 0 0;
}
.saved {
  color: #dc143c;
}
.done {
  width: 34px;
  height: 16px;
  margin: 0 7px 0 2px;
  border: 1px solid #bbb;
  border-radius: 2px;
}
.printer {
  margin-right: 9px;
}
.envelope {
  margin: 0 10px 0 7px;
}
.q-head {
  display: flex;
  align-items: center;
  height: 21px;
  margin: 1px 157px 0 31px;
  padding-right: 6px;
  border: 1px solid #c8c8c8;
  border-width: 1px 0;
}
.q-head.first {
  margin-top: 8px;
  border-top: 0;
}
.q-head b {
  flex: 1;
  margin-left: 5px;
}
.q-head span {
  margin: 0 4px 0 3px;
}
.q-head span:last-child {
  margin-right: 0;
}
.dot {
  width: 7px;
  height: 7px;
  margin: 0 1px;
  border-radius: 50%;
  background-color: #00008b;
}
.notice {
  margin: 8px 38px 0 39px;
  padding: 8px 10px 0;
  border-top: 2px solid #f9a833;
}
.notice p + p {
  margin-top: 9px;
}
.question {
  padding: 0 160px 0 40px;
}
.answers {
  display: flex;
  flex-direction: column;
  margin: 0 2px 0 -1px;
  padding: 1px 1px 3px;
  border: 1px solid #1ba31b;
}
.answers label {
  display: flex;
  align-items: center;
  gap: 2px;
  height: 16px;
  padding-left: 13px;
  white-space: nowrap;
}
.answers input {
  width: 8px;
  height: 8px;
  margin: 0;
}
.answers.symbols {
  margin-top: -1px;
  padding-top: 4px;
}
.symbols label {
  align-items: flex-start;
  height: 22px;
  margin-bottom: 6px;
}
.symbols input {
  margin-top: 1px;
}
.answers.continued {
  margin-top: -6px;
  border-top: 0;
}
.continued .math {
  padding-left: 23px;
}
.continued .ok {
  margin-top: 8px;
}
.ok {
  margin-top: 5px;
}
.math {
  font: 10px/11px "Liberation Serif", serif;
}
.hyp {
  width: 15px;
  margin-right: -3px;
}
.row {
  display: flex;
  align-items: center;
  gap: 3px;
  height: 11px;
  white-space: nowrap;
}
.row.tall {
  height: 18px;
}
.row.snug {
  height: 10px;
}
.row.snug + .tall {
  height: 17px;
}
.row.tight {
  gap: 0;
}
.row.cut {
  margin-top: -9px;
}
.row + p {
  line-height: 11px;
}
.box {
  width: 112px;
  height: 18px;
  padding: 0 3px;
  border: 1px solid #999;
  border-radius: 2px;
  background-color: #fff;
  font: 8px "Liberation Sans", sans-serif;
}
.box.short {
  width: 64px;
}
.page .right {
  border-color: #1ba31b;
}
.page .wrong {
  border-color: #a01515;
}
.line {
  align-self: flex-end;
  width: 39px;
  height: 12px;
  padding: 0;
  border: 0;
  border-bottom: 1px solid #777;
  background: none;
  font: 8px "Liberation Sans", sans-serif;
}
.line.long {
  width: 55px;
}
.page select {
  appearance: none;
  height: 12px;
  padding: 0 0 0 2px;
  border: 1px solid #777;
  border-radius: 1px;
  background: #fff url("data:image/svg+xml,%3Csvg xmlns='http://www.w3.org/2000/svg' width='7' height='5' viewBox='0 0 7 5'%3E%3Cpath d='M.5.8l3 3 3-3' fill='none' stroke='%23111' stroke-width='1.4'/%3E%3C/svg%3E") no-repeat right 4px center;
  color: #111;
  font: 8px/10px "Liberation Sans", sans-serif;
}
.page .sel-small { width: 78px; }
.page .sel-sign { width: 24px; }
.page .sel-decision { width: 127px; }
.page .sel-summary { width: 188px; }
.page .sel-why { width: 212px; }
.page .sel-sig { width: 120px; }
.page .sel-rule { width: 91px; }
.page .sel-conclude { width: 345px; }
.page .sel-conclude.narrow { width: 339px; }
.mark {
  margin: 0 -1px 4px -2px;
}
.hours {
  width: 36px;
  height: 153px;
  margin: 11px 0 0 11px;
  border-collapse: collapse;
  font-size: 8px;
  line-height: 9px;
  text-align: center;
}
.hours th,
.hours td {
  padding: 0;
  border: 1px solid #000;
}
.hours th {
  border-bottom-width: 2px;
}
.help {
  display: flex;
  align-items: center;
  height: 10px;
  margin-left: -1px;
}
.help svg {
  margin: 0 3px 0 7px;
}
.help a {
  color: #3a3aad;
  text-decoration: none;
}
.submit {
  width: 76px;
  height: 16px;
  margin: 9px 0 0 1px;
  border: 1px solid #bbb;
  border-radius: 2px;
  color: #aaa;
}

/* taskbar */
.taskbar {
  flex: none;
  display: flex;
  height: 60px;
  background: linear-gradient(90deg, #20323a, #2b3539 25%, #22303a 50%, #2a3136 75%, #1c2b34);
}
.start {
  width: 72px;
}
.taskbar-search {
  display: flex;
  align-items: center;
  gap: 17px;
  width: 514px;
  padding-left: 16px;
  border: 2px solid #5d5f61;
  background-color: #333;
}
.taskbar-search input {
  flex: 1;
  border: 0;
  padding: 0;
  background: none;
  font: inherit;
  font-size: 21px;
}
.taskbar-search input::placeholder {
  color: #d5d5d5;
}
.apps {
  display: flex;
}
.apps button {
  width: 75px;
  border-bottom: 3px solid transparent;
}
.apps .running {
  width: 61px;
  margin: 0 7px;
  border-color: #f5a46c;
}
.apps .current {
  width: 73px;
  margin: 0 1px;
  border-color: #f5a46c;
  background-color: #525c63;
}
.mail-app,
.notifications {
  position: relative;
}
.count {
  position: absolute;
  top: 29px;
  left: 31px;
  width: 44px;
  height: 25px;
  border: 1px solid #999;
  border-radius: 13px;
  background-color: #333b40;
  font-size: 18px;
  font-weight: 600;
  line-height: 22px;
}
.notifications .count {
  width: 25px;
}
.weather {
  gap: 12px;
  margin-left: auto;
  padding-right: 18px;
  font-size: 20px;
}
.tray {
  display: flex;
}
.tray button {
  width: 48px;
}
.tray .lang {
  width: 68px;
  padding-left: 10px;
}
.tray .clock {
  width: 100px;
  flex-direction: column;
  gap: 4px;
  line-height: 24px;
}
.tray .notifications {
  width: 75px;
  margin-right: 6px;
  padding-right: 12px;
  border-right: 1px solid #777;
}
```
